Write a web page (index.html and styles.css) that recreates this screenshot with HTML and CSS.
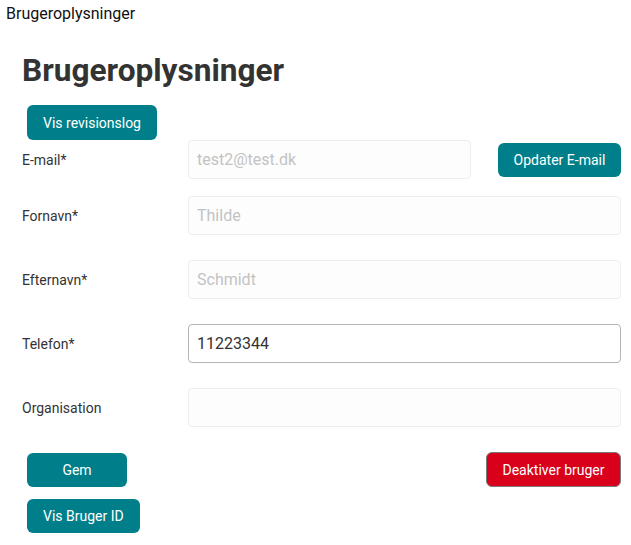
FILE: index.html
```html
<!DOCTYPE html>
<html lang="da">
<head>
  <meta charset="UTF-8">
  <meta name="viewport" content="width=device-width, initial-scale=1.0">
  <title>Brugeroplysninger</title>
  <link rel="stylesheet" href="styles.css">
</head>
<body>
  <div class="topbar">Brugeroplysninger</div>
  <div class="container">
    <h1>Brugeroplysninger</h1>
    <button class="btn">Vis revisionslog</button>
    <form class="user-form">
      <div class="row row-first">
        <label for="email">E-mail*</label>
        <div class="field-group">
          <input id="email" class="field" type="text" value="test2@test.dk" disabled>
          <button type="button" class="btn btn-side">Opdater E-mail</button>
        </div>
      </div>
      <div class="row row-tight">
        <label for="fornavn">Fornavn*</label>
        <input id="fornavn" class="field" type="text" value="Thilde" disabled>
      </div>
      <div class="row">
        <label for="efternavn">Efternavn*</label>
        <input id="efternavn" class="field" type="text" value="Schmidt" disabled>
      </div>
      <div class="row">
        <label for="telefon">Telefon*</label>
        <input id="telefon" class="field field-active" type="text" value="11223344">
      </div>
      <div class="row">
        <label for="org">Organisation</label>
        <input id="org" class="field" type="text" value="" disabled>
      </div>
      <div class="actions">
        <button type="button" class="btn btn-save">Gem</button>
        <button type="button" class="btn btn-danger">Deaktiver bruger</button>
      </div>
      <button type="button" class="btn btn-id">Vis Bruger ID</button>
    </form>
  </div>
</body>
</html>
```

FILE: styles.css
```css
body {
  font-family: Roboto, "Liberation Sans", sans-serif;
  margin: 0;
  padding: 0;
  color: #333;
  background-color: #fff;
}
.topbar {
  font-size: 16px;
  line-height: 19px;
  padding: 4px 6px 0;
  color: #111;
}
.container {
  padding: 0 10px 0 22px;
}
h1 {
  font-size: 31.6px;
  line-height: 38px;
  font-weight: 700;
  color: #333;
  margin: 29px 0 15px 0;
}
.btn {
  display: block;
  height: 35px;
  padding: 0 16px;
  font-family: Roboto, "Liberation Sans", sans-serif;
  font-size: 14px;
  color: #fff;
  background-color: #007f8a;
  border: none;
  border-radius: 6px;
  margin-left: 5px;
  cursor: pointer;
}
.user-form {
  margin-top: 0;
}
.row {
  display: grid;
  grid-template-columns: 166px 1fr;
  align-items: center;
  margin-top: 25px;
}
.row-first {
  margin-top: 0;
}
.row-tight {
  margin-top: 17px;
}
.row label {
  font-size: 14px;
  color: #333;
}
.field-group {
  display: flex;
  align-items: center;
  gap: 27px;
}
.field {
  box-sizing: border-box;
  width: 100%;
  height: 39px;
  padding: 0 8px;
  font-family: Roboto, "Liberation Sans", sans-serif;
  font-size: 16px;
  color: #333;
  background-color: #fdfdfd;
  border: 1px solid #eeeeee;
  border-radius: 4px;
  outline: none;
}
.field:disabled {
  color: #c3c3c3;
  -webkit-text-fill-color: #c3c3c3;
}
.field-active {
  background-color: #fff;
  border-color: #b5b5b5;
}
.btn-side {
  flex: 0 0 123px;
  height: 34px;
  padding: 0;
  margin-left: 0;
}
.actions {
  display: flex;
  justify-content: space-between;
  align-items: center;
  margin-top: 25px;
  margin-bottom: 12px;
}
.btn-save {
  width: 100px;
  height: 34px;
}
.btn-id {
  height: 34px;
}
.btn-danger {
  width: 135px;
  padding: 0;
  background-color: #d9001b;
  border: 1px solid #7a7a7a;
}
```
